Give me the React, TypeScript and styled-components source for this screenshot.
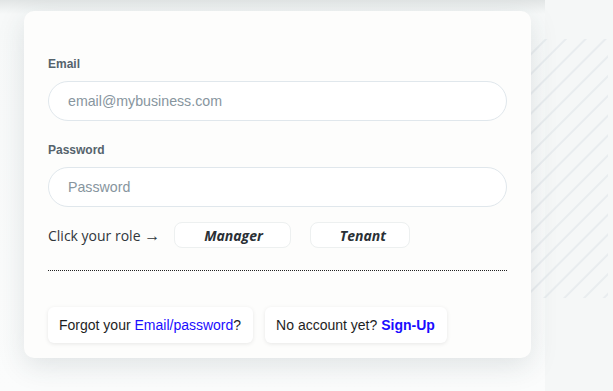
import styled, { createGlobalStyle } from 'styled-components';

const GlobalStyle = createGlobalStyle`
  html, body {
    margin: 0;
    padding: 0;
    background: #f5f7f7;
    overflow: hidden;
  }
  * {
    box-sizing: border-box;
  }
`;

const Page = styled.div`
  position: relative;
  display: flex;
  height: 100vh;
  font-family: 'Liberation Sans', Arial, sans-serif;
`;

const Column = styled.div`
  flex: 0 0 545px;
  padding: 11px 14px 0 24px;
  background: linear-gradient(to bottom, #e1e5e5 0, #ebeeee 6px, #f7f9f9 14px, #fbfcfc 100%);
`;

const Side = styled.div`
  flex: 1;
`;

const Stripes = styled.svg`
  position: absolute;
  left: 440px;
  top: 39px;
  z-index: 1;
`;

const Card = styled.div`
  position: relative;
  z-index: 2;
  display: flex;
  flex-direction: column;
  padding: 46px 24px 15px;
  background: #fdfdfc;
  border-radius: 10px;
  box-shadow: 0 8px 28px rgba(40, 60, 70, 0.13);
`;

const Label = styled.label`
  display: block;
  font-size: 12px;
  line-height: 14px;
  font-weight: 700;
  color: #55636c;
  margin-bottom: 10px;
`;

const Input = styled.input`
  display: block;
  width: 100%;
  height: 40px;
  padding: 0 19px;
  border: 1px solid #e0e7ec;
  border-radius: 20px;
  background: #fff;
  font-family: 'Liberation Sans', Arial, sans-serif;
  font-size: 14.2px;
  color: #333;
  outline: none;

  &::placeholder {
    color: #87959e;
  }
`;

const Field = styled.div<{ $gap?: number }>`
  margin-bottom: ${(p) => p.$gap ?? 0}px;
`;

const RoleRow = styled.div`
  display: flex;
  align-items: center;
  height: 26px;
  font-family: 'Open Sans', sans-serif;
`;

const RoleText = styled.span`
  font-size: 14px;
  color: #30363b;
  margin-right: 14px;
  white-space: pre;
`;

const Arrow = styled.span`
  display: inline-block;
  width: 16px;
  font-family: 'Noto Sans', sans-serif;
  font-size: 16px;
  font-weight: 300;
`;

const RoleButton = styled.button<{ $pr: number }>`
  height: 26px;
  padding: 0 ${(p) => p.$pr}px 0 29px;
  margin-right: 19px;
  border: 1px solid #edf0f0;
  border-radius: 8px;
  background: #fff;
  font-family: 'Open Sans', sans-serif;
  font-size: 14px;
  font-weight: 700;
  font-style: italic;
  color: #2a3035;
  cursor: pointer;
`;

const Divider = styled.hr`
  margin: 22px 0 36px;
  border: 0;
  border-top: 1px dotted #222;
`;

const Footer = styled.div`
  display: flex;
  gap: 12px;
`;

const Chip = styled.div`
  height: 36px;
  display: flex;
  align-items: center;
  padding: 0 12px 0 11px;
  background: #fff;
  border-radius: 6px;
  box-shadow: 0 1px 4px rgba(0, 0, 0, 0.09);
  font-size: 14px;
  color: #1e1e1e;
  white-space: pre;
`;

const Link = styled.a<{ $bold?: boolean }>`
  color: #1a0dff;
  text-decoration: none;
  font-weight: ${(p) => (p.$bold ? 700 : 400)};
`;

function StripeDecor() {
  return (
    <Stripes width="168" height="259" viewBox="0 0 168 259">
      <defs>
        <pattern
          id="diag"
          width="14"
          height="14"
          patternUnits="userSpaceOnUse"
          patternTransform="rotate(45)"
        >
          <line x1="5" y1="0" x2="5" y2="14" stroke="#dce2e7" strokeWidth="1" />
        </pattern>
      </defs>
      <rect width="168" height="259" fill="url(#diag)" />
    </Stripes>
  );
}

function App() {
  return (
    <>
      <GlobalStyle />
      <Page>
        <StripeDecor />
        <Column>
          <Card>
            <Field $gap={22}>
              <Label>Email</Label>
              <Input type="email" placeholder="email@mybusiness.com" />
            </Field>
            <Field $gap={15}>
              <Label>Password</Label>
              <Input type="password" placeholder="Password" />
            </Field>
            <RoleRow>
              <RoleText>
                Click your role <Arrow>→</Arrow>
              </RoleText>
              <RoleButton $pr={27}>Manager</RoleButton>
              <RoleButton $pr={23}>Tenant</RoleButton>
            </RoleRow>
            <Divider />
            <Footer>
              <Chip>
                Forgot your <Link href="#">Email/password</Link>?
              </Chip>
              <Chip>
                No account yet? <Link href="#" $bold>Sign-Up</Link>
              </Chip>
            </Footer>
          </Card>
        </Column>
        <Side />
      </Page>
    </>
  );
}

export default App;
